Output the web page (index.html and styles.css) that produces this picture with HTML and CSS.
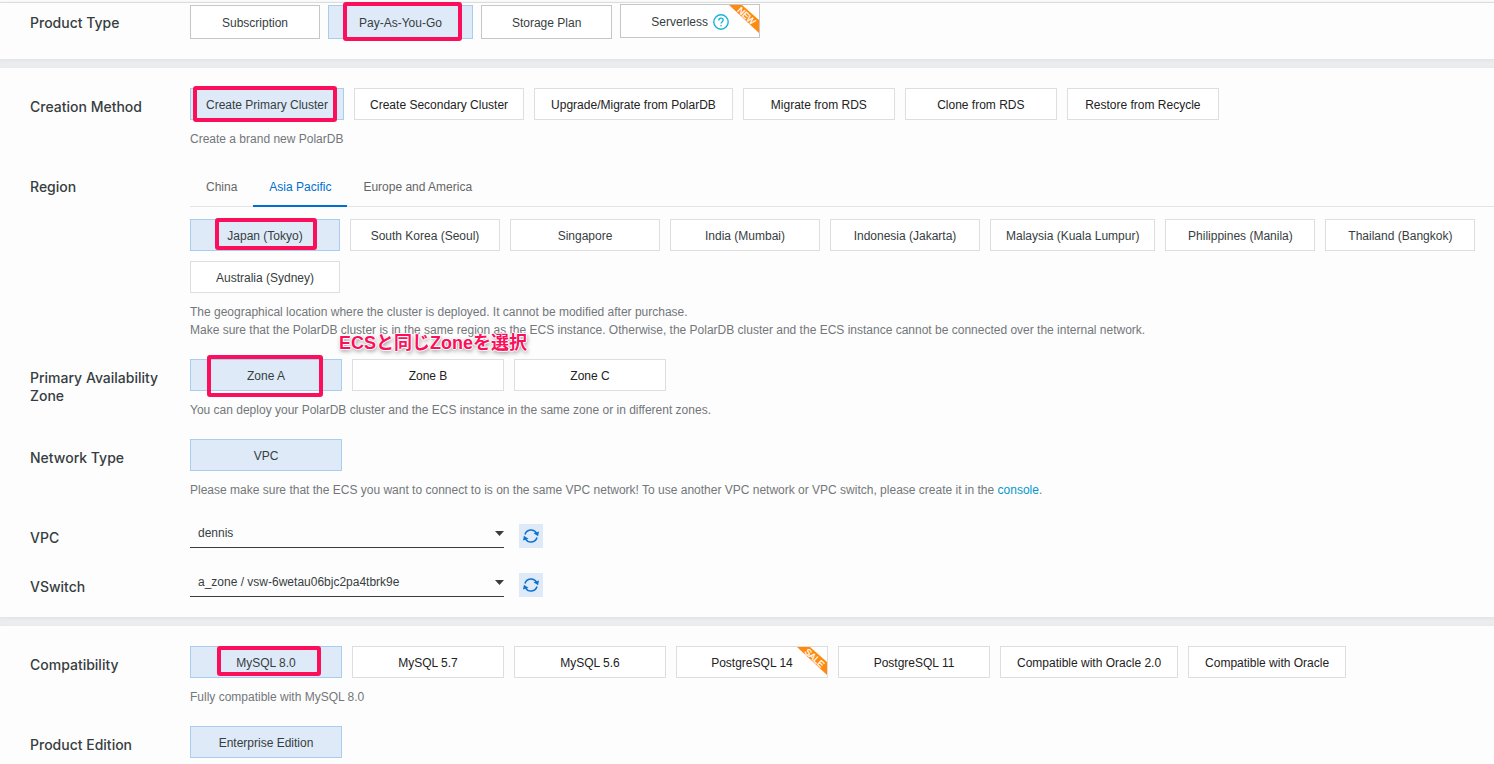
FILE: index.html
```
<!DOCTYPE html>
<html lang="en">
<head>
<meta charset="utf-8">
<title>PolarDB</title>
<link rel="stylesheet" href="styles.css">
</head>
<body>
<main class="page">
  <section class="panel panel-first">
    <div class="row">
      <h2 class="label">Product Type</h2>
      <div class="options options-product">
        <button class="option" type="button">Subscription</button>
        <button class="option selected" type="button">Pay-As-You-Go<span class="mark mark-payg"></span></button>
        <button class="option" type="button">Storage Plan</button>
        <button class="option option-serverless" type="button">Serverless
          <svg class="help-icon" viewBox="0 0 16 16" aria-hidden="true"><circle cx="8" cy="8" r="7.2"/><path d="M5.8 6.4c0-1.5 1-2.3 2.2-2.3s2.2.8 2.2 2c0 1.5-2.1 1.7-2.1 3.4"/><path d="M8.1 10.9v1.3"/></svg>
          <svg class="ribbon" viewBox="0 0 30 28" aria-hidden="true"><path d="M0 0h13l17 15v13z"/><text transform="translate(17 11.5) rotate(43)">NEW</text></svg>
        </button>
      </div>
    </div>
  </section>

  <section class="panel">
    <div class="row">
      <h2 class="label">Creation Method</h2>
      <div class="field">
        <div class="options">
          <button class="option selected" type="button">Create Primary Cluster<span class="mark mark-create"></span></button>
          <button class="option" type="button">Create Secondary Cluster</button>
          <button class="option option-long" type="button">Upgrade/Migrate from PolarDB</button>
          <button class="option" type="button">Migrate from RDS</button>
          <button class="option" type="button">Clone from RDS</button>
          <button class="option" type="button">Restore from Recycle</button>
        </div>
        <p class="hint">Create a brand new PolarDB</p>
      </div>
    </div>

    <div class="row">
      <h2 class="label">Region</h2>
      <div class="field field-region">
        <div class="tabs">
          <button class="tab" type="button">China</button>
          <button class="tab active" type="button">Asia Pacific</button>
          <button class="tab" type="button">Europe and America</button>
        </div>
        <div class="options options-region">
          <button class="option selected" type="button">Japan (Tokyo)<span class="mark mark-tokyo"></span></button>
          <button class="option" type="button">South Korea (Seoul)</button>
          <button class="option" type="button">Singapore</button>
          <button class="option" type="button">India (Mumbai)</button>
          <button class="option" type="button">Indonesia (Jakarta)</button>
          <button class="option" type="button">Malaysia (Kuala Lumpur)</button>
          <button class="option" type="button">Philippines (Manila)</button>
          <button class="option" type="button">Thailand (Bangkok)</button>
          <button class="option" type="button">Australia (Sydney)</button>
        </div>
        <p class="hint">The geographical location where the cluster is deployed. It cannot be modified after purchase.<br>Make sure that the PolarDB cluster is in the same region as the ECS instance. Otherwise, the PolarDB cluster and the ECS instance cannot be connected over the internal network.</p>
      </div>
    </div>

    <div class="row">
      <h2 class="label">Primary Availability Zone</h2>
      <div class="field">
        <div class="options">
          <button class="option selected" type="button">Zone A<span class="mark mark-zone"></span></button>
          <button class="option" type="button">Zone B</button>
          <button class="option" type="button">Zone C</button>
        </div>
        <p class="hint">You can deploy your PolarDB cluster and the ECS instance in the same zone or in different zones.</p>
        <span class="note" lang="ja">ECSと同じZoneを選択</span>
      </div>
    </div>

    <div class="row">
      <h2 class="label">Network Type</h2>
      <div class="field">
        <div class="options">
          <button class="option selected" type="button">VPC</button>
        </div>
        <p class="hint">Please make sure that the ECS you want to connect to is on the same VPC network! To use another VPC network or VPC switch, please create it in the <a href="#">console</a>.</p>
      </div>
    </div>

    <div class="row">
      <label class="label" for="vpc">VPC</label>
      <div class="picker">
        <div class="select">
          <select id="vpc"><option>dennis</option></select>
          <svg class="caret" viewBox="0 0 9 5" aria-hidden="true"><path d="M0 0h9L4.500 5z"/></svg>
        </div>
        <button class="refresh" type="button" aria-label="Refresh VPC list">
          <svg viewBox="0 0 16 16" aria-hidden="true"><path class="arc" d="M2 6.500A6.300 6.300 0 0 1 13.500 5.200M14 9.500A6.300 6.300 0 0 1 2.500 10.800"/><path class="tip" d="M10.500 5.200L16 3.400l-.9 4.800zM5.500 10.800L0 12.600l.9-4.800z"/></svg>
        </button>
      </div>
    </div>

    <div class="row">
      <label class="label" for="vswitch">VSwitch</label>
      <div class="picker">
        <div class="select">
          <select id="vswitch"><option>a_zone / vsw-6wetau06bjc2pa4tbrk9e</option></select>
          <svg class="caret" viewBox="0 0 9 5" aria-hidden="true"><path d="M0 0h9L4.500 5z"/></svg>
        </div>
        <button class="refresh" type="button" aria-label="Refresh VSwitch list">
          <svg viewBox="0 0 16 16" aria-hidden="true"><path class="arc" d="M2 6.500A6.300 6.300 0 0 1 13.500 5.200M14 9.500A6.300 6.300 0 0 1 2.500 10.800"/><path class="tip" d="M10.500 5.200L16 3.400l-.9 4.800zM5.500 10.800L0 12.600l.9-4.800z"/></svg>
        </button>
      </div>
    </div>
  </section>

  <section class="panel panel-last">
    <div class="row">
      <h2 class="label">Compatibility</h2>
      <div class="field">
        <div class="options">
          <button class="option selected" type="button">MySQL 8.0<span class="mark mark-mysql"></span></button>
          <button class="option" type="button">MySQL 5.7</button>
          <button class="option" type="button">MySQL 5.6</button>
          <button class="option" type="button">PostgreSQL 14
            <svg class="ribbon" viewBox="0 0 30 28" aria-hidden="true"><path d="M0 0h13l17 15v13z"/><text transform="translate(17 11.5) rotate(43)">SALE</text></svg>
          </button>
          <button class="option" type="button">PostgreSQL 11</button>
          <button class="option option-long" type="button">Compatible with Oracle 2.0</button>
          <button class="option option-long" type="button">Compatible with Oracle</button>
        </div>
        <p class="hint">Fully compatible with MySQL 8.0</p>
      </div>
    </div>
    <div class="row">
      <h2 class="label">Product Edition</h2>
      <div class="field">
        <div class="options">
          <button class="option selected" type="button">Enterprise Edition</button>
        </div>
      </div>
    </div>
  </section>
</main>
</body>
</html>
```
FILE: styles.css
```
* { box-sizing: border-box; }

body {
  margin: 0;
  background: #ecedef;
  color: #373d41;
  font: 12px/18px "Liberation Sans", Arial, sans-serif;
}

button, select { font: inherit; color: inherit; }

.page {
  display: flex;
  flex-direction: column;
  gap: 9px;
  padding-top: 2px;
  min-height: 100vh;
  background: linear-gradient(#fdfdfd 2px, #ecedef 2px);
}

.panel {
  display: flex;
  flex-direction: column;
  gap: 20px;
  padding: 20px 0 20px 30px;
  background: #fdfdfd;
  box-shadow: 0 1px 4px #dddfe2;
}
.panel-first { padding-top: 1px; border-top: 1px solid #dcdcdc; }
.panel-last { flex: 1; padding-bottom: 6px; }

.row {
  display: grid;
  grid-template-columns: 160px minmax(0, 1fr);
}

.label {
  margin: 0;
  padding: 10px 16px 0 0;
  font: 500 14px/18px Inter, "Liberation Sans", sans-serif;
}

.field { position: relative; }

.options {
  display: flex;
  flex-wrap: wrap;
  gap: 10px;
  padding-right: 8px;
}

.option {
  position: relative;
  min-width: 152px;
  height: 32px;
  padding: 2px 15px 0;
  border: 1px solid #dedede;
  background: #fff;
  color: #222;
}
.option-long { padding: 2px 16px 0; }
.option.selected {
  border-color: #a9cdec;
  background: #deeaf7;
  color: #373d41;
}

.options-product { gap: 8px; padding-top: 1px; }
.options-product .option {
  min-width: 130px;
  height: 34px;
  padding: 2px 30px 0;
  border-color: #c4c6c8;
  color: #373d41;
}
.options-product .selected { border-color: #a9cdec; }
.options-product .option-serverless {
  display: flex;
  align-items: center;
  gap: 5px;
  margin-top: -1px;
}
.options-region .option { min-width: 150px; padding-top: 1px; color: #373d41; }

.hint {
  margin: 10px 0 0;
  color: #73777a;
}
.hint a { color: #0099cc; text-decoration: none; }

.tabs {
  display: flex;
  margin-bottom: 12px;
  border-bottom: 1px solid #e4e5e6;
}
.tab {
  height: 39px;
  margin-bottom: -1px;
  padding: 0 16px;
  border: 0;
  border-bottom: 2px solid transparent;
  background: none;
  color: #666;
}
.tab.active { border-color: #0070cc; color: #0070cc; }

.help-icon {
  width: 16px;
  height: 16px;
  fill: none;
  stroke: #17b5d8;
  stroke-width: 1.4;
}

.ribbon {
  position: absolute;
  top: 0;
  right: 0;
  width: 30px;
  height: 28px;
  fill: #ff8a0f;
}
.ribbon text {
  fill: #fff;
  stroke: #fff;
  stroke-width: 0.3;
  font-size: 9px;
  text-anchor: middle;
  dominant-baseline: middle;
}

.picker { display: flex; align-items: flex-end; gap: 15px; }
.select { position: relative; width: 314px; }
.select select {
  display: block;
  width: 100%;
  height: 29px;
  padding: 0 24px 0 8px;
  appearance: none;
  border: 0;
  border-bottom: 1px solid #373d41;
  border-radius: 0;
  background: transparent;
}
.caret {
  position: absolute;
  top: 12px;
  right: 0;
  width: 9px;
  height: 5px;
  fill: #373d41;
  pointer-events: none;
}

.refresh {
  display: grid;
  place-items: center;
  width: 24px;
  height: 24px;
  padding: 0;
  border: 0;
  background: #deeaf7;
}
.refresh svg { width: 16px; height: 16px; }
.refresh .arc { fill: none; stroke: #1173d0; stroke-width: 1.6; }
.refresh .tip { fill: #1173d0; }

/* Hand-drawn highlights over the chosen options */
.mark {
  position: absolute;
  border: 4px solid #fb0f5b;
  border-radius: 3px;
  pointer-events: none;
}
.mark-payg { inset: -4px 10px -3px 14px; }
.mark-create { inset: -3px 6px -3px 2px; }
.mark-tokyo { inset: -2px 22px 0 24px; }
.mark-zone { inset: -5px 18px -7px 16px; }
.mark-mysql { inset: -1px 20px 1px 26px; }

.note {
  position: absolute;
  top: -28px;
  left: 149px;
  color: #fb0f5b;
  font: 700 18px/24px "Liberation Sans", "Noto Sans CJK JP", sans-serif;
  white-space: nowrap;
  text-shadow: 1px 0 #fff, -1px 0 #fff, 0 1px #fff, 0 -1px #fff, 1px 2px 4px #777;
}
```
